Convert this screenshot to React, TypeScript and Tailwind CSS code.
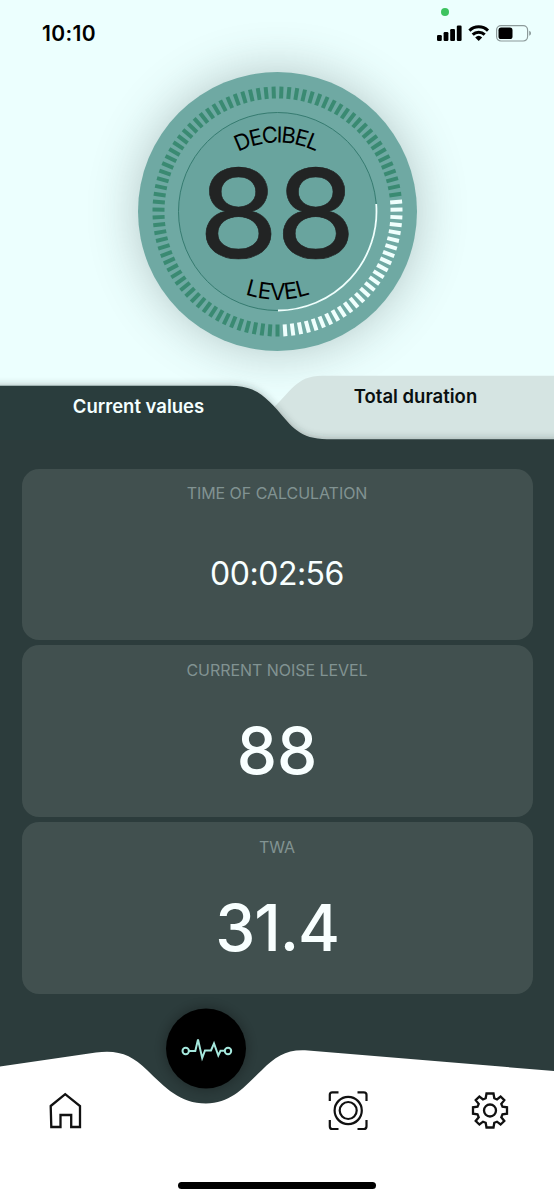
const TICK_COUNT = 99
const ACTIVE_FROM = 23
const ACTIVE_TO = 48

const cards = [
  { label: "TIME OF CALCULATION", value: "00:02:56", valueSize: "text-[32px] tracking-[-0.5px]" },
  { label: "CURRENT NOISE LEVEL", value: "88", valueSize: "text-[64px] font-medium" },
  { label: "TWA", value: "31.4", valueSize: "text-[64px] font-medium tracking-[-1.1px]" },
]

function StatusBar() {
  return (
    <header className="flex h-[72px] items-start justify-between pl-[42px] pr-[22px]">
      <span className="mt-[19px] text-[21px] font-semibold leading-[29px] tracking-[0.35px] text-black">10:10</span>
      <svg className="mt-1" width="98" height="40" viewBox="434 4 98 40">
        <circle cx="445" cy="12" r="4" fill="#3dc35f" />
        <g fill="#000">
          <rect x="437" y="35" width="4.8" height="6" rx="1.2" />
          <rect x="443.6" y="32" width="4.8" height="9" rx="1.2" />
          <rect x="450.2" y="29" width="4.8" height="12" rx="1.2" />
          <rect x="456.8" y="25.5" width="4.8" height="15.5" rx="1.2" />
          <path d="M475.2 37.4a5.2 5.2 0 0 1 7 0l-3.5 3.5z" />
        </g>
        <g fill="none" stroke="#000" strokeWidth="3">
          <path d="M469.4 30.6a13.4 13.4 0 0 1 18.6 0" />
          <path d="M472.7 34.6a8.6 8.6 0 0 1 12 0" />
        </g>
        <rect x="496.6" y="25.6" width="31" height="15.4" rx="4.4" fill="none" stroke="#8c9a9a" strokeWidth="1.2" />
        <rect x="498.5" y="27.6" width="14" height="11.4" rx="2.6" fill="#000" />
        <path d="M529.2 30.8c2.4 .8 2.4 4.2 0 5z" fill="#8c9a9a" />
      </svg>
    </header>
  )
}

function DecibelDial() {
  return (
    <svg
      className="h-[279px] w-[279px] rounded-full bg-[#6fa9a3] shadow-[0_0_50px_rgba(60,80,80,0.33)]"
      viewBox="-139.5 -139.5 279 279"
    >
      <defs>
        <path id="arc-top" d="M-86 17A86 86 0 0 1 86 17" />
        <path id="arc-bottom" d="M-104 -16A104 104 0 0 0 104 -16" />
      </defs>

      {/* Tick ring */}
      {Array.from({ length: TICK_COUNT }, (_, i) => (
        <line
          key={i}
          y1={-113}
          y2={-125}
          stroke={i >= ACTIVE_FROM && i <= ACTIVE_TO ? "#effffd" : "#3a8a72"}
          strokeWidth="4"
          transform={`rotate(${((i + 0.5) * 360) / TICK_COUNT})`}
        />
      ))}

      {/* Inner ring */}
      <circle r="99" fill="#69a49e" stroke="#367b70" strokeWidth="1" />
      <path d="M98.7 -7.5A99 99 0 0 1 0.5 99" fill="none" stroke="#effffd" strokeWidth="1.8" />

      <text fontSize="22" fill="#000" textAnchor="middle" letterSpacing="-1.7">
        <textPath href="#arc-top" startOffset="49.5%">DECIBEL</textPath>
      </text>
      <text fontSize="22.5" fill="#000" textAnchor="middle" letterSpacing="-0.4">
        <textPath href="#arc-bottom" startOffset="50%">LEVEL</textPath>
      </text>
      <text
        x="-1.8"
        y="46.3"
        fontSize="124"
        fill="#222424"
        stroke="#222424"
        strokeWidth="0.6"
        textAnchor="middle"
        letterSpacing="-3"
        transform="scale(1.05 1)"
      >
        88
      </text>
    </svg>
  )
}

function Tabs() {
  return (
    <div className="relative h-[78px]">
      <svg className="absolute inset-0" width="554" height="78" viewBox="0 362 554 78">
        <defs>
          <filter id="tab-shadow" x="-10%" y="-40%" width="120%" height="180%">
            <feDropShadow dx="0" dy="-1" stdDeviation="3.5" floodColor="#263a38" floodOpacity="0.3" />
          </filter>
        </defs>
        <path d="M270 411C291 392 296 375.700 322 375.700H554V440H270Z" fill="#d5e4e2" />
        <path
          d="M-30 385.700H230C254 385.700 264 395 277 409.500C291 426 300 439.200 327 439.200H590V480H-30Z"
          fill="#2c3c3c"
          filter="url(#tab-shadow)"
        />
      </svg>
      <div className="relative flex text-[18.5px] font-semibold leading-6">
        <button className="mt-8 h-6 w-[277px] text-[#f4ffff]">Current values</button>
        <button className="mt-[22px] h-6 w-[277px] text-[#0a1010]">Total duration</button>
      </div>
    </div>
  )
}

function BottomNav() {
  return (
    <nav className="relative h-[206px]">
      <svg className="absolute inset-0" width="554" height="206" viewBox="0 994 554 206">
        <defs>
          <filter id="orb-shadow" x="-50%" y="-50%" width="200%" height="200%">
            <feDropShadow dx="0" dy="0" stdDeviation="7" floodColor="#000" floodOpacity="0.35" />
          </filter>
        </defs>
        <path
          d="M0 1066.500L96 1052.600C119 1049.500 132 1055.500 147 1070C165 1087.500 180 1103.500 206 1103.500C232 1103.500 246 1085 262 1070C275 1057 286 1049.500 305 1050.300L554 1071V1200H0Z"
          fill="#fff"
        />
        <circle cx="206" cy="1048.500" r="40" fill="#000" filter="url(#orb-shadow)" />
        <g fill="none" stroke="#a5e8dd" strokeWidth="2">
          <circle cx="185.700" cy="1051" r="3.200" />
          <circle cx="228" cy="1051" r="3.200" />
          <path d="M189 1051H195.300L198 1039.500L202.200 1058L205 1050.500H211L214 1043.500L218.300 1055.500L220.500 1050.800H224.800" />
        </g>
      </svg>

      <div className="relative flex h-full items-start pt-[97px]">
        <button className="ml-12 h-10 w-9" aria-label="Home">
          <svg width="36" height="40" viewBox="48 1091 36 40" fill="none" stroke="#111" strokeWidth="2.3">
            <path d="M50.700 1106L65.200 1094.200L80 1106V1127H71.200V1115H60.500V1127H51.300Z" />
          </svg>
        </button>
        <button className="ml-[242px] h-10 w-11" aria-label="Measure">
          <svg width="44" height="40" viewBox="326 1091 44 40" fill="none" stroke="#111" strokeWidth="2.2">
            <path d="M338.500 1092.300H332.300Q329.800 1092.300 329.800 1094.800V1101M357.500 1092.300H363.700Q366.500 1092.300 366.500 1094.800V1101M366.500 1120V1126.200Q366.500 1129 363.700 1129H357.500M338.500 1129H332.300Q329.800 1129 329.800 1126.200V1120" />
            <circle cx="348.200" cy="1110.500" r="13.600" />
            <circle cx="348.200" cy="1110.500" r="8.500" />
          </svg>
        </button>
        <button className="ml-[100px] h-10 w-10" aria-label="Settings">
          <svg width="40" height="40" viewBox="-20 -19.500 40 40" fill="none" stroke="#111" strokeWidth="2.3">
            <path d="M-3.500 -17H3.500L4.300 -12.200L7 -11L10.600 -14L14.300 -10.300L11.300 -6.600L12.500 -3.800L17 -3.200V3.200L12.500 3.900L11.300 6.700L14.300 10.500L10.600 14L7 11.200L4.300 12.300L3.500 17H-3.500L-4.300 12.300L-7 11.200L-10.600 14L-14.300 10.500L-11.300 6.700L-12.500 3.900L-17 3.200V-3.200L-12.500 -3.800L-11.300 -6.600L-14.300 -10.300L-10.600 -14L-7 -11L-4.300 -12.200Z" />
            <circle r="6" />
          </svg>
        </button>
      </div>

      {/* Home indicator */}
      <div className="absolute bottom-[11px] left-[178px] h-[7px] w-[198px] rounded-full bg-black" />
    </nav>
  )
}

export default function App() {
  return (
    <div className="flex h-[1200px] w-[554px] flex-col overflow-hidden bg-[#ecfffe] font-['Inter',sans-serif]">
      <StatusBar />

      <section className="flex h-[290px] shrink-0 justify-center">
        <DecibelDial />
      </section>

      <Tabs />

      <main className="bg-[#2c3c3c]">
        <div className="flex flex-col gap-[5.5px] px-[21.5px] pb-[0.5px] pt-[28.7px]">
          {cards.map((card) => (
            <section key={card.label} className="flex h-[171.3px] flex-col items-center rounded-[17px] bg-[#41504f]">
              <h2 className="mt-[12.6px] text-[16px] leading-6 tracking-[-0.05px] text-[#819392]">{card.label}</h2>
              <p className={`flex h-[138px] shrink-0 items-center leading-none text-[#f8ffff] ${card.valueSize}`}>{card.value}</p>
            </section>
          ))}
        </div>
        <BottomNav />
      </main>
    </div>
  )
}
